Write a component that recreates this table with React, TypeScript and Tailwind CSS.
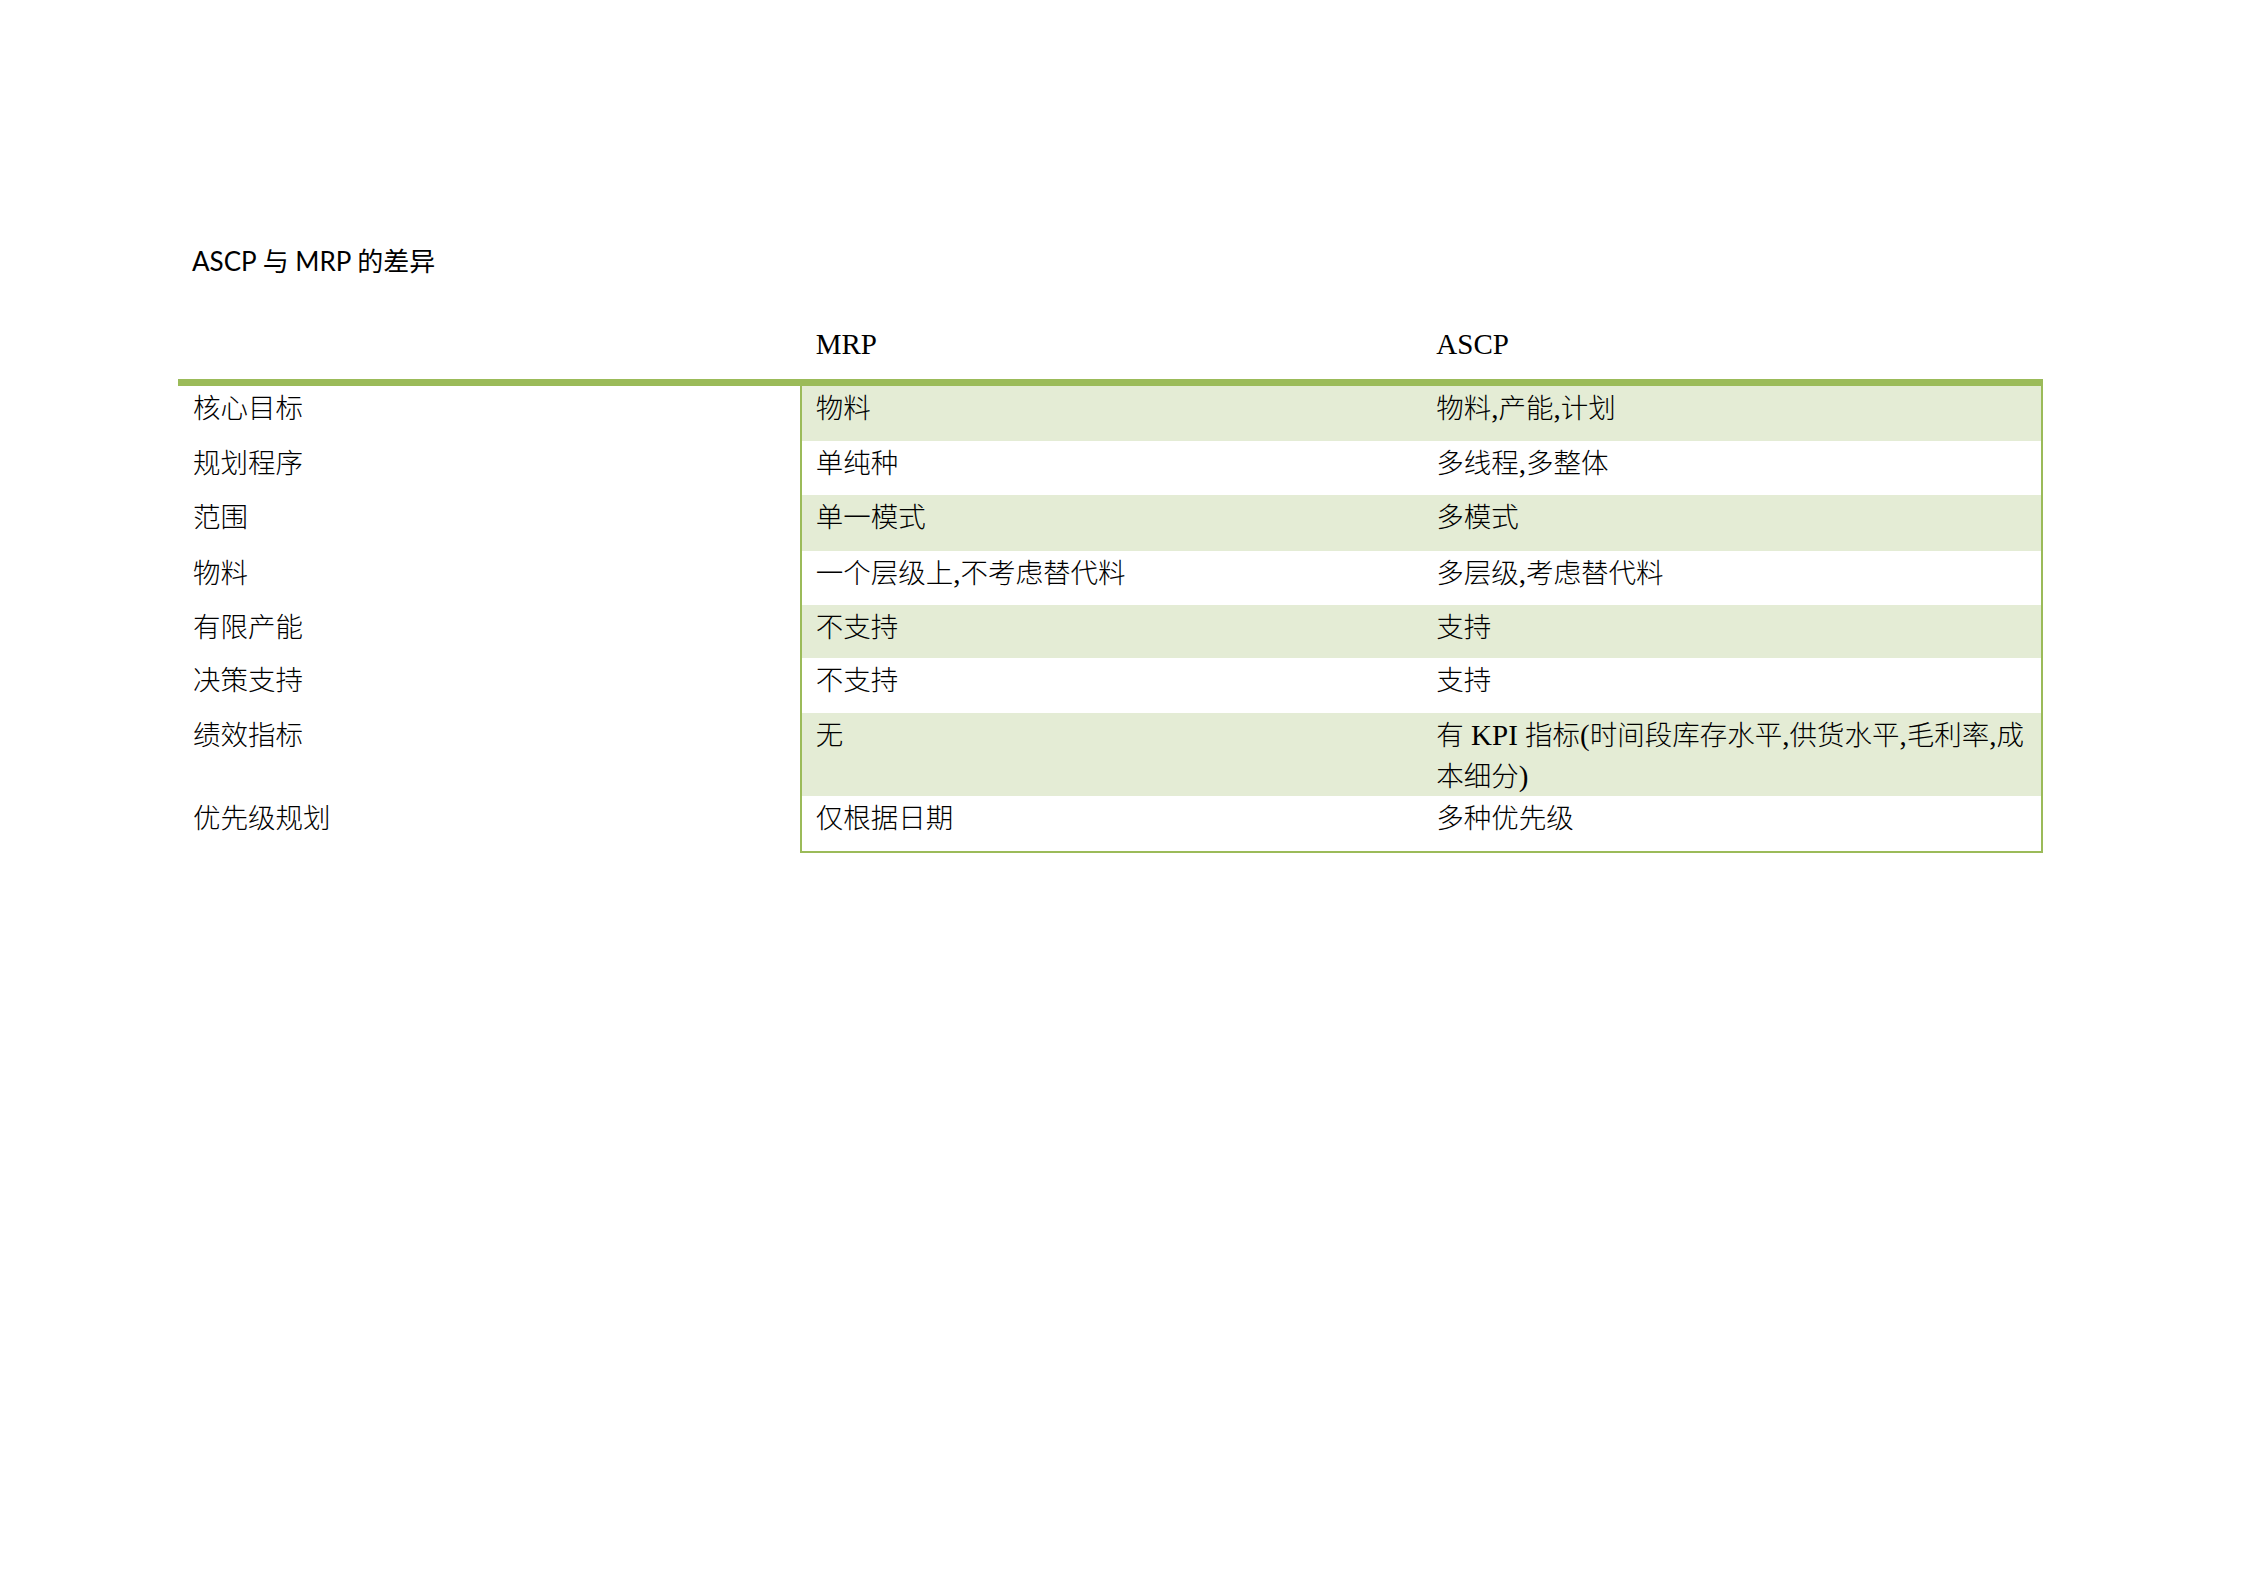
const rows = [
  { name: "核心目标", mrp: "物料", ascp: ["物料,产能,计划"], h: "h-[55px]", shade: true },
  { name: "规划程序", mrp: "单纯种", ascp: ["多线程,多整体"], h: "h-[54px]", shade: false },
  { name: "范围", mrp: "单一模式", ascp: ["多模式"], h: "h-[56px]", shade: true },
  { name: "物料", mrp: "一个层级上,不考虑替代料", ascp: ["多层级,考虑替代料"], h: "h-[54px]", shade: false },
  { name: "有限产能", mrp: "不支持", ascp: ["支持"], h: "h-[53px]", shade: true },
  { name: "决策支持", mrp: "不支持", ascp: ["支持"], h: "h-[55px]", shade: false },
  {
    name: "绩效指标",
    mrp: "无",
    ascp: ["有 KPI 指标(时间段库存水平,供货水平,毛利率,成", "本细分)"],
    h: "h-[83px]",
    shade: true,
  },
  { name: "优先级规划", mrp: "仅根据日期", ascp: ["多种优先级"], h: "h-[57px]", shade: false },
];

const body = "font-['Liberation_Serif','Noto_Sans_CJK_SC',serif] text-[27.5px] leading-[41px] text-black font-light";

// Latin runs are set a touch larger than the CJK, like the Word original
function Mixed({ text }: { text: string }) {
  const parts = text.split(/([\x20-\x7e]+)/).filter((p) => p !== "");
  return (
    <>
      {parts.map((p, i) =>
        /^[\x20-\x7e]+$/.test(p) ? (
          <span key={i} className="text-[29px] font-normal leading-none">
            {p}
          </span>
        ) : (
          <span key={i}>{p}</span>
        )
      )}
    </>
  );
}

export default function App() {
  return (
    <div className="min-h-screen bg-white pl-[178px] pt-[243px]">
      {/* Title */}
      <div className="pl-[14px] font-['Lato','Noto_Sans_CJK_SC',sans-serif] text-[26px] leading-[37px] text-black">
        ASCP 与 MRP 的差异
      </div>

      <div className={`w-[1865px] mt-[44px] ${body}`}>
        {/* Header */}
        <div className="grid grid-cols-3 pb-[14px] text-[29px] font-normal">
          <div className="px-[15px]"></div>
          <div className="px-[16px]">MRP</div>
          <div className="px-[15px]">ASCP</div>
        </div>
        <div className="h-[7px] bg-[#9bbb59]"></div>

        {/* Rows */}
        {rows.map((row, i) => (
          <div key={i} className={`grid grid-cols-3 ${row.h}`}>
            <div className="px-[15px] pt-[2px]">{row.name}</div>
            <div
              className={`col-span-2 grid grid-cols-2 border-x-2 border-[#9bbb59] ${
                row.shade ? "bg-[#e4ecd5]" : "bg-white"
              } ${i === rows.length - 1 ? "border-b-2" : ""}`}
            >
              <div className="px-[14px] pt-[2px]">
                <Mixed text={row.mrp} />
              </div>
              <div className="px-[15px] pt-[2px]">
                {row.ascp.map((line, j) => (
                  <div key={j} className="whitespace-nowrap">
                    <Mixed text={line} />
                  </div>
                ))}
              </div>
            </div>
          </div>
        ))}
      </div>
    </div>
  );
}
